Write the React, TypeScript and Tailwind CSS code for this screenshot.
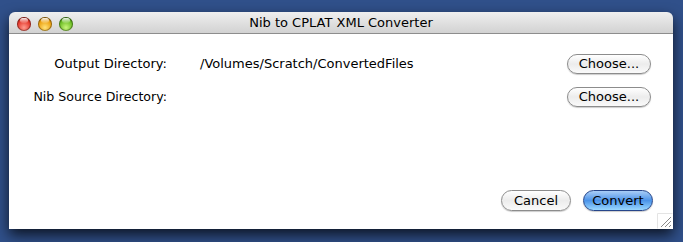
import React from "react";

const font = { fontFamily: '"Lucida Grande", "DejaVu Sans", sans-serif' };

function Light({ c1, c2, c3 }: { c1: string; c2: string; c3: string }) {
  return (
    <div
      className="w-[14px] h-[14px] rounded-full relative"
      style={{
        background: `radial-gradient(circle at 50% 75%, ${c1} 0%, ${c2} 55%, ${c3} 100%)`,
        boxShadow: "inset 0 0 0 1px rgba(0,0,0,0.35)",
      }}
    >
      <div className="absolute left-[3px] top-[1px] w-[8px] h-[5px] rounded-full bg-gradient-to-b from-white/90 to-white/10" />
    </div>
  );
}

function AquaButton({ children, blue, w, h = "h-[20px]" }: { children: React.ReactNode; blue?: boolean; w: string; h?: string }) {
  return (
    <div
      className={`${w} ${h} rounded-full flex items-center justify-center text-[13px] text-black border ${
        blue
          ? "border-[#27468a] bg-gradient-to-b from-[#a9cdf6] via-[#4b93e8] to-[#9ad8ff]"
          : "border-[#8c8c8c] bg-gradient-to-b from-white via-[#ececec] to-[#fafafa]"
      } shadow-[0_1px_1px_rgba(0,0,0,0.2)]`}
      style={font}
    >
      {children}
    </div>
  );
}

export default function App() {
  return (
    <div className="w-[683px] h-[242px] bg-[#30508a] overflow-hidden pl-[9px] pt-[12px]">
      <div className="w-[664px] h-[217px] flex flex-col rounded-t-[6px] shadow-[0_6px_14px_rgba(0,0,0,0.75)] overflow-hidden" style={font}>
        <div className="h-[22px] shrink-0 relative flex items-center bg-gradient-to-b from-[#efefef] to-[#d2d2d2] border-b border-[#8d8d8d]">
          <div className="flex gap-[7px] pl-[8px] pt-[2px]">
            <Light c1="#ff9b8e" c2="#e5392c" c3="#8f1a12" />
            <Light c1="#ffe27a" c2="#eda10f" c3="#8f5a06" />
            <Light c1="#c9f57c" c2="#6cbd24" c3="#2f6b0d" />
          </div>
          <div className="absolute inset-0 flex items-center justify-center text-[13px] text-black pt-[1px]">
            Nib to CPLAT XML Converter
          </div>
        </div>
        <div className="flex-1 bg-white relative flex flex-col pt-[20px] pr-[22px]">
          <div className="flex items-center h-[20px]">
            <div className="w-[158px] text-right text-[13px] text-black">Output Directory:</div>
            <div className="ml-[33px] text-[13px] text-black">/Volumes/Scratch/ConvertedFiles</div>
            <div className="ml-auto">
              <AquaButton w="w-[84px]">Choose...</AquaButton>
            </div>
          </div>
          <div className="flex items-center h-[20px] mt-[13px]">
            <div className="w-[158px] text-right text-[12.6px] text-black">Nib Source Directory:</div>
            <div className="ml-auto">
              <AquaButton w="w-[84px]">Choose...</AquaButton>
            </div>
          </div>
          <div className="flex justify-end gap-[12px] mt-[83px] mr-[-2px]">
            <AquaButton w="w-[70px]" h="h-[21px]">Cancel</AquaButton>
            <AquaButton w="w-[70px]" h="h-[21px]" blue>Convert</AquaButton>
          </div>
          <svg className="absolute right-0 bottom-0" width="16" height="16" viewBox="0 0 16 16">
            <path d="M0.5 15.5V0.5H15.5" fill="none" stroke="#e4e4e4" />
            <path d="M14 4L4 14M14 8L8 14M14 12L12 14" stroke="#8a8a8a" strokeWidth="1" />
            <path d="M15 5L5 15M15 9L9 15" stroke="#ffffff" strokeWidth="1" />
          </svg>
        </div>
      </div>
    </div>
  );
}
